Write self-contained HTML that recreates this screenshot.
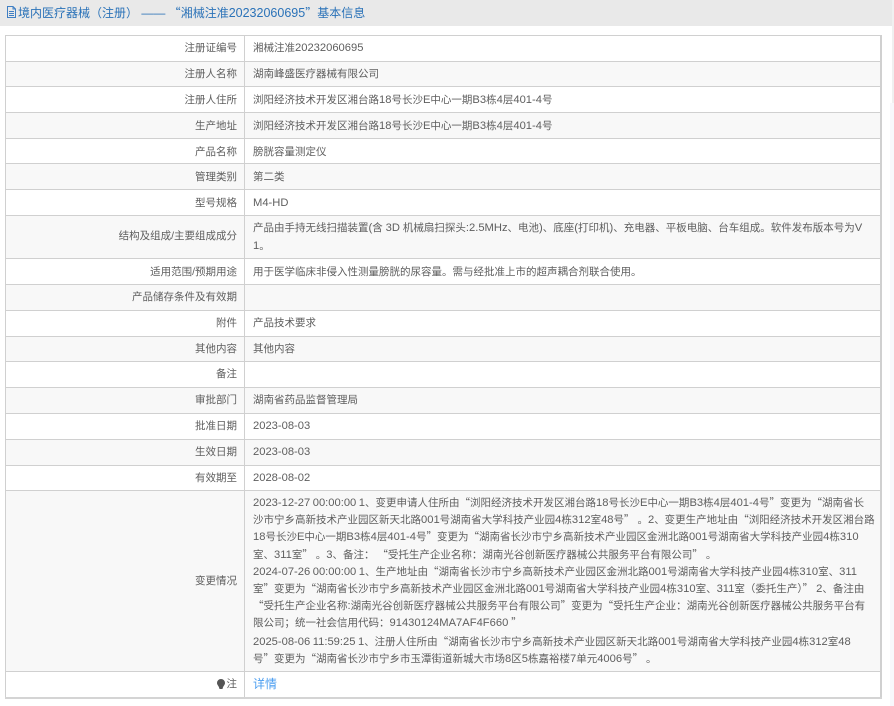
<!DOCTYPE html>
<html lang="zh"><head><meta charset="utf-8"><title>基本信息</title>
<style>
html,body{margin:0;padding:0;background:#fff;width:894px;height:706px;overflow:hidden}
body{position:relative;font-family:"Liberation Sans","Noto Sans CJK SC",sans-serif;font-size:10.5px;color:#5e5e5e}
i{font-style:normal;font-size:11.2px}
i.d{word-spacing:-.6px}
b{font-weight:normal;font-family:"Noto Sans CJK SC","Liberation Sans",sans-serif}
.a{position:absolute}
.h{left:0;top:0;width:892px;height:26px;background:#e9e9e9}
.t{left:18px;top:4px;font-size:12px;line-height:17px;color:#2a72b8;white-space:nowrap}
.t i{font-size:12.5px}
.r{left:5px;width:875px;border-top:1px solid #d0d0d0;box-sizing:border-box}
.s{background:#f8f8f8}
.l{left:100px;width:137px;text-align:right;white-space:nowrap;line-height:16px}
.v{left:253px;white-space:nowrap;line-height:16px}
</style></head><body>
<div class="a h"></div>
<div class="a" style="left:892px;top:0;width:2px;height:103px;background:#f0f0f0"></div>
<div class="a" style="left:890px;top:103px;width:4px;height:603px;background:#f8f8fc"></div>
<svg class="a" style="left:6px;top:6px" width="11" height="12" viewBox="0 0 11 12"><path d="M1.500 .5h5.500l2.500 2.500v8.500h-8zM7 .5v2.500h2.500M3 5.500h5M3 7.500h5M3 9.500h5" fill="none" stroke="#3f7fc4" stroke-width="1"/></svg>
<div class="a t">境内医疗器械（注册） —— <b>“</b>湘械注准<i>20232060695</i><b>”</b>基本信息</div>

<div class="a r" style="top:35px;height:26px"></div>
<div class="a r s" style="top:61px;height:25px"></div>
<div class="a r" style="top:86px;height:26px"></div>
<div class="a r s" style="top:112px;height:26px"></div>
<div class="a r" style="top:138px;height:25px"></div>
<div class="a r s" style="top:163px;height:26px"></div>
<div class="a r" style="top:189px;height:26px"></div>
<div class="a r s" style="top:215px;height:43px"></div>
<div class="a r" style="top:258px;height:26px"></div>
<div class="a r s" style="top:284px;height:26px"></div>
<div class="a r" style="top:310px;height:26px"></div>
<div class="a r s" style="top:336px;height:25px"></div>
<div class="a r" style="top:361px;height:26px"></div>
<div class="a r s" style="top:387px;height:26px"></div>
<div class="a r" style="top:413px;height:26px"></div>
<div class="a r s" style="top:439px;height:26px"></div>
<div class="a r" style="top:465px;height:25px"></div>
<div class="a r s" style="top:490px;height:181px"></div>
<div class="a r" style="top:671px;height:26px"></div>
<div class="a" style="left:5px;top:35px;width:1px;height:663px;background:#d0d0d0"></div>
<div class="a" style="left:880px;top:35px;width:2px;height:663px;background:#d0d0d0"></div>
<div class="a" style="left:5px;top:697px;width:877px;height:2px;background:#d4d4d4"></div>
<div class="a" style="left:244px;top:35px;width:1px;height:662px;background:#d0d0d0"></div>

<div class="a l" style="top:40px">注册证编号</div><div class="a v" style="top:40px">湘械注准<i>20232060695</i></div>
<div class="a l" style="top:66px">注册人名称</div><div class="a v" style="top:66px">湖南峰盛医疗器械有限公司</div>
<div class="a l" style="top:92px">注册人住所</div><div class="a v" style="top:92px">浏阳经济技术开发区湘台路<i>18</i>号长沙<i>E</i>中心一期<i>B3</i>栋<i>4</i>层<i>401-4</i>号</div>
<div class="a l" style="top:118px">生产地址</div><div class="a v" style="top:118px">浏阳经济技术开发区湘台路<i>18</i>号长沙<i>E</i>中心一期<i>B3</i>栋<i>4</i>层<i>401-4</i>号</div>
<div class="a l" style="top:144px">产品名称</div><div class="a v" style="top:144px">膀胱容量测定仪</div>
<div class="a l" style="top:169px">管理类别</div><div class="a v" style="top:169px">第二类</div>
<div class="a l" style="top:195px">型号规格</div><div class="a v" style="top:195px"><i>M4-HD</i></div>
<div class="a l" style="top:228px">结构及组成/主要组成成分</div>
<div class="a v" style="top:220px">产品由手持无线扫描装置<i>(</i>含 <i>3D</i> 机械扇扫探头<i>:2.5MHz</i>、电池<i>)</i>、底座<i>(</i>打印机<i>)</i>、充电器、平板电脑、台车组成。软件发布版本号为<i>V</i></div>
<div class="a v" style="top:238px"><i>1</i>。</div>
<div class="a l" style="top:264px">适用范围/预期用途</div><div class="a v" style="top:264px">用于医学临床非侵入性测量膀胱的尿容量。需与经批准上市的超声耦合剂联合使用。</div>
<div class="a l" style="top:289px">产品储存条件及有效期</div>
<div class="a l" style="top:315px">附件</div><div class="a v" style="top:315px">产品技术要求</div>
<div class="a l" style="top:341px">其他内容</div><div class="a v" style="top:341px">其他内容</div>
<div class="a l" style="top:366px">备注</div>
<div class="a l" style="top:392px">审批部门</div><div class="a v" style="top:392px">湖南省药品监督管理局</div>
<div class="a l" style="top:418px">批准日期</div><div class="a v" style="top:418px"><i>2023-08-03</i></div>
<div class="a l" style="top:444px">生效日期</div><div class="a v" style="top:444px"><i>2023-08-03</i></div>
<div class="a l" style="top:470px">有效期至</div><div class="a v" style="top:470px"><i>2028-08-02</i></div>
<div class="a l" style="top:573px">变更情况</div>
<div class="a v" style="top:495px"><i class="d">2023-12-27 00:00:00 1</i>、变更申请人住所由<b>“</b>浏阳经济技术开发区湘台路<i>18</i>号长沙<i>E</i>中心一期<i>B3</i>栋<i>4</i>层<i>401-4</i>号<b>”</b>变更为<b>“</b>湖南省长</div>
<div class="a v" style="top:512px">沙市宁乡高新技术产业园区新天北路<i>001</i>号湖南省大学科技产业园<i>4</i>栋<i>312</i>室<i>48</i>号<b>”</b> 。<i>2</i>、变更生产地址由<b>“</b>浏阳经济技术开发区湘台路</div>
<div class="a v" style="top:529px"><i>18</i>号长沙<i>E</i>中心一期<i>B3</i>栋<i>4</i>层<i>401-4</i>号<b>”</b>变更为<b>“</b>湖南省长沙市宁乡高新技术产业园区金洲北路<i>001</i>号湖南省大学科技产业园<i>4</i>栋<i>310</i></div>
<div class="a v" style="top:547px">室、<i>311</i>室<b>”</b> 。<i>3</i>、备注： <b>“</b>受托生产企业名称：湖南光谷创新医疗器械公共服务平台有限公司<b>”</b> 。</div>
<div class="a v" style="top:564px"><i class="d">2024-07-26 00:00:00 1</i>、生产地址由<b>“</b>湖南省长沙市宁乡高新技术产业园区金洲北路<i>001</i>号湖南省大学科技产业园<i>4</i>栋<i>310</i>室、<i>311</i></div>
<div class="a v" style="top:581px">室<b>”</b>变更为<b>“</b>湖南省长沙市宁乡高新技术产业园区金洲北路<i>001</i>号湖南省大学科技产业园<i>4</i>栋<i>310</i>室、<i>311</i>室（委托生产）<b>”</b> <i>2</i>、备注由</div>
<div class="a v" style="top:598px"><b>“</b>受托生产企业名称<i>:</i>湖南光谷创新医疗器械公共服务平台有限公司<b>”</b>变更为<b>“</b>受托生产企业：湖南光谷创新医疗器械公共服务平台有</div>
<div class="a v" style="top:615px">限公司；统一社会信用代码：<i>91430124MA7AF4F660</i> <b>”</b></div>
<div class="a v" style="top:634px"><i class="d">2025-08-06 11:59:25 1</i>、注册人住所由<b>“</b>湖南省长沙市宁乡高新技术产业园区新天北路<i>001</i>号湖南省大学科技产业园<i>4</i>栋<i>312</i>室<i>48</i></div>
<div class="a v" style="top:651px">号<b>”</b>变更为<b>“</b>湖南省长沙市宁乡市玉潭街道新城大市场<i>8</i>区<i>5</i>栋嘉裕楼<i>7</i>单元<i>4006</i>号<b>”</b> 。</div>
<div class="a l" style="top:676px">注</div>
<svg class="a" style="left:216px;top:678px" width="10" height="13" viewBox="0 0 10 13"><path d="M5 1a4 4 0 0 1 4 4c0 2-2 3-2.500 6h-3C3 8 1 7 1 5a4 4 0 0 1 4-4z" fill="#555"/></svg>
<div class="a v" style="top:676px;color:#4a9df0;font-size:12px">详情</div>
</body></html>
